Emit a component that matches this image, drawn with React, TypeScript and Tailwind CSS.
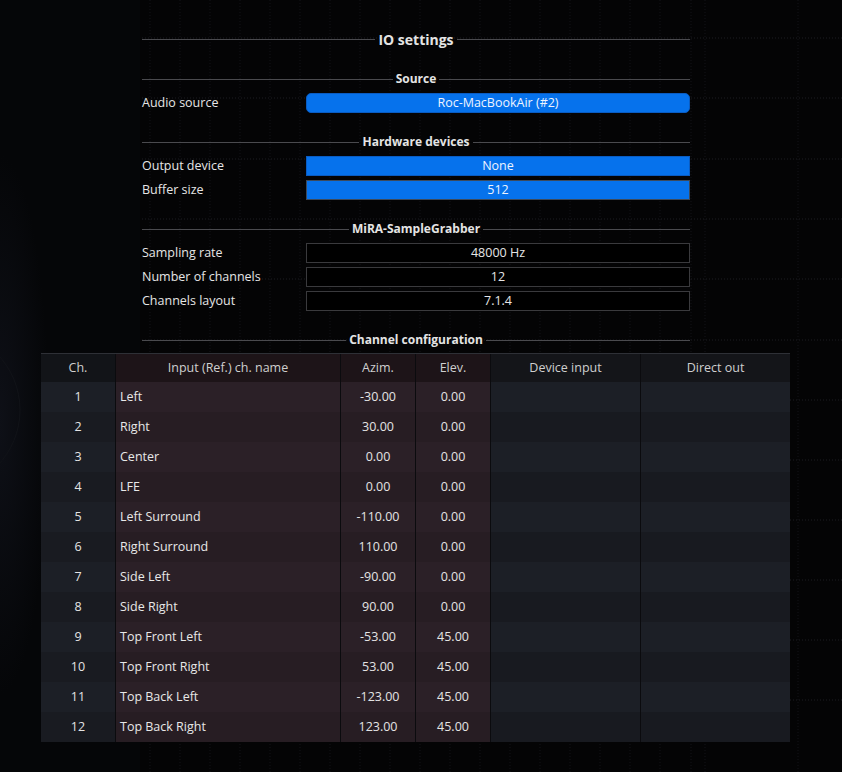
import React from "react"

const channels = [
  { n: 1, name: "Left", az: "-30.00", el: "0.00" },
  { n: 2, name: "Right", az: "30.00", el: "0.00" },
  { n: 3, name: "Center", az: "0.00", el: "0.00" },
  { n: 4, name: "LFE", az: "0.00", el: "0.00" },
  { n: 5, name: "Left Surround", az: "-110.00", el: "0.00" },
  { n: 6, name: "Right Surround", az: "110.00", el: "0.00" },
  { n: 7, name: "Side Left", az: "-90.00", el: "0.00" },
  { n: 8, name: "Side Right", az: "90.00", el: "0.00" },
  { n: 9, name: "Top Front Left", az: "-53.00", el: "45.00" },
  { n: 10, name: "Top Front Right", az: "53.00", el: "45.00" },
  { n: 11, name: "Top Back Left", az: "-123.00", el: "45.00" },
  { n: 12, name: "Top Back Right", az: "123.00", el: "45.00" },
]

function SectionHeader({ title, big }: { title: string; big?: boolean }) {
  return (
    <div className={`flex items-center ${big ? "h-5" : "h-4"}`}>
      <div className="flex-1 border-t border-[#4a4a4e]" />
      <span className={`px-[3px] font-bold text-[#e4e4e4] ${big ? "text-[14px]" : "text-[12px]"}`}>{title}</span>
      <div className="flex-1 border-t border-[#4a4a4e]" />
    </div>
  )
}

function Row({ label, children }: { label: string; children: React.ReactNode }) {
  return (
    <div className="grid grid-cols-[164px_384px] h-5 items-center">
      <span className="text-[12.5px] text-[#e6e6e6]">{label}</span>
      {children}
    </div>
  )
}

// faint meter grid that sits behind the dialog
function BackdropGrid() {
  const hs = [38, 98, 159, 219, 279, 340, 400, 460, 520, 580, 640, 700]
  const vs = [150, 180, 210, 240, 270, 300, 330, 360, 390, 420, 450, 480, 510, 540, 570, 600, 630, 660, 691, 705, 798]
  return (
    <svg className="absolute inset-0 pointer-events-none" width="842" height="772">
      <defs>
        <radialGradient id="glow" cx="0" cy="0.55" r="0.35">
          <stop offset="0" stopColor="#0e1017" />
          <stop offset="1" stopColor="#050608" />
        </radialGradient>
      </defs>
      <rect x="0" y="0" width="140" height="772" fill="url(#glow)" />
      <circle cx="-60" cy="410" r="80" fill="none" stroke="#111318" strokeWidth="1" />
      {hs.map((y) => (
        <line key={y} x1="142" x2="842" y1={y} y2={y} stroke="#1c1d22" strokeDasharray="1 2" />
      ))}
      {vs.map((x) => (
        <line key={x} x1={x} x2={x} y1="0" y2="772" stroke="#121318" strokeDasharray="1 2" />
      ))}
    </svg>
  )
}

export default function App() {
  return (
    <div
      className="relative w-[842px] h-[772px] overflow-hidden bg-[#040405]"
      style={{ fontFamily: '"Open Sans", "Noto Sans", sans-serif' }}
    >
      <BackdropGrid />
      <div className="relative">
        <div className="ml-[142px] w-[548px] pt-[29px]">
          <SectionHeader title="IO settings" big />

          <div className="mt-[22px]">
            <SectionHeader title="Source" />
          </div>
          <div className="mt-[6px]">
            <Row label="Audio source">
              <div className="h-5 rounded-[5px] border border-[#0a5cc2] bg-[#0672ec] flex items-center justify-center text-[12.5px] text-[#eef4ff]">
                Roc-MacBookAir (#2)
              </div>
            </Row>
          </div>

          <div className="mt-[21px]">
            <SectionHeader title="Hardware devices" />
          </div>
          <div className="mt-[6px] flex flex-col gap-1">
            <Row label="Output device">
              <div className="h-5 border border-[#0a5cc2] bg-[#0672ec] flex items-center justify-center text-[12.5px] text-[#eef4ff]">
                None
              </div>
            </Row>
            <Row label="Buffer size">
              <div className="h-5 border border-[#3c4a5c] bg-[#0672ec] flex items-center justify-center text-[12.5px] text-[#eef4ff]">
                512
              </div>
            </Row>
          </div>

          <div className="mt-[21px]">
            <SectionHeader title="MiRA-SampleGrabber" />
          </div>
          <div className="mt-[6px] flex flex-col gap-1">
            {[
              ["Sampling rate", "48000 Hz"],
              ["Number of channels", "12"],
              ["Channels layout", "7.1.4"],
            ].map(([l, v]) => (
              <Row key={l} label={l}>
                <div className="h-5 border border-[#3a3a3d] bg-black flex items-center justify-center text-[12.5px] text-[#e6e6e6]">
                  {v}
                </div>
              </Row>
            ))}
          </div>

          <div className="mt-[21px]">
            <SectionHeader title="Channel configuration" />
          </div>
        </div>

        <div className="ml-[41px] mt-[5px] w-[749px] border-t border-[#2e3036] bg-[#0b0b0e] grid grid-cols-[74px_224px_74px_74px_149px_149px] gap-x-px text-[12.5px]">
          <div className="h-[28px] bg-[#121418] flex items-center justify-center text-[#cfcfcf]">Ch.</div>
          <div className="h-[28px] bg-[#1d1418] flex items-center justify-center text-[#cfcfcf]">Input (Ref.) ch. name</div>
          <div className="h-[28px] bg-[#1d1418] flex items-center justify-center text-[#cfcfcf]">Azim.</div>
          <div className="h-[28px] bg-[#1d1418] flex items-center justify-center text-[#cfcfcf]">Elev.</div>
          <div className="h-[28px] bg-[#141519] flex items-center justify-center text-[#cfcfcf]">Device input</div>
          <div className="h-[28px] bg-[#141519] flex items-center justify-center text-[#cfcfcf]">Direct out</div>
          {channels.map((c, i) => {
            const odd = i % 2 === 0
            const chBg = odd ? "bg-[#1c1f26]" : "bg-[#191b21]"
            const inBg = odd ? "bg-[#2b2027]" : "bg-[#271d23]"
            const devBg = odd ? "bg-[#1c1f26]" : "bg-[#181a20]"
            return (
              <React.Fragment key={c.n}>
                <div className={`h-[30px] ${chBg} flex items-center justify-center text-[#e4e4e4]`}>{c.n}</div>
                <div className={`h-[30px] ${inBg} flex items-center pl-[4px] text-[#e8e8e8]`}>{c.name}</div>
                <div className={`h-[30px] ${inBg} flex items-center justify-center text-[#e4e4e4]`}>{c.az}</div>
                <div className={`h-[30px] ${inBg} flex items-center justify-center text-[#e4e4e4]`}>{c.el}</div>
                <div className={`h-[30px] ${devBg}`} />
                <div className={`h-[30px] ${devBg}`} />
              </React.Fragment>
            )
          })}
        </div>
      </div>
    </div>
  )
}
